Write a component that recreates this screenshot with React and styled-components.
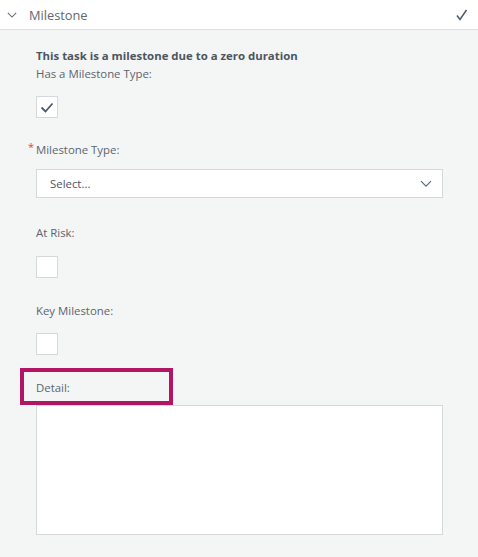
import React from 'react'
import styled, { createGlobalStyle } from 'styled-components'

const Global = createGlobalStyle`
  html, body {
    margin: 0;
    padding: 0;
    background: #f4f6f5;
  }
  body {
    font-family: 'Open Sans', 'Noto Sans', sans-serif;
    color: #5b6470;
  }
`

const Header = styled.div`
  display: flex;
  align-items: center;
  height: 30px;
  padding: 0 10px 0 7px;
  background: #fff;
  border-bottom: 1px solid #dcdfe0;
  box-sizing: border-box;
`

const HeaderTitle = styled.span`
  flex: 1;
  margin-left: 12px;
  font-size: 12.8px;
  color: #5f6873;
`

const Body = styled.div`
  padding: 18px 35px 22px 36px;
`

const Notice = styled.div`
  font-size: 11.4px;
  font-weight: 700;
  line-height: 16px;
  color: #4d5561;
`

const Label = styled.div`
  position: relative;
  font-size: 11.4px;
  line-height: 16px;
  color: #5b6470;
  margin-top: ${p => p.$top || 0}px;
`

const Required = styled.span`
  position: absolute;
  left: -8px;
  top: -3px;
  color: #e0454a;
  font-size: 11px;
`

const Box = styled.div`
  width: 22px;
  height: 22px;
  box-sizing: border-box;
  background: #fff;
  border: 1px solid #d6d9da;
  display: flex;
  align-items: center;
  justify-content: center;
  margin-top: ${p => p.$top || 0}px;
`

const Select = styled.div`
  display: flex;
  align-items: center;
  justify-content: space-between;
  height: 29px;
  box-sizing: border-box;
  margin-top: 11px;
  padding: 0 10px 0 13px;
  background: #fff;
  border: 1px solid #d6d9da;
  font-size: 11.4px;
  color: #4d5561;
`

const Highlight = styled.div`
  margin: 13px 0 0 -16px;
  width: 153px;
  height: 37px;
  box-sizing: border-box;
  border: 4px solid #b31565;
  padding: 8px 0 0 12px;
  font-size: 11.4px;
  line-height: 16px;
  color: #5b6470;
`

const TextArea = styled.div`
  height: 130px;
  box-sizing: border-box;
  background: #fff;
  border: 1px solid #d6d9da;
`

const Chevron = ({ size = 12 }) => (
  <svg width={size} height={size * 0.6} viewBox="0 0 12 7" fill="none">
    <path d="M1 1l5 5 5-5" stroke="#5f6e80" strokeWidth="1.3" />
  </svg>
)

const Check = () => (
  <svg width="14" height="11" viewBox="0 0 14 11" fill="none">
    <path d="M1.5 5.5l4 4 7-8" stroke="#4d5a6c" strokeWidth="1.8" />
  </svg>
)

const HeaderTick = () => (
  <svg width="12" height="12" viewBox="0 0 12 12" fill="none">
    <path d="M1 6.5l3 4L10.5 1" stroke="#4f5b6a" strokeWidth="1.5" />
  </svg>
)

export default function App() {
  return (
    <>
      <Global />
      <Header>
        <Chevron size={10} />
        <HeaderTitle>Milestone</HeaderTitle>
        <HeaderTick />
      </Header>
      <Body>
        <Notice>This task is a milestone due to a zero duration</Notice>
        <Label $top={2}>Has a Milestone Type:</Label>
        <Box $top={14}>
          <Check />
        </Box>
        <Label $top={24}>
          <Required>*</Required>Milestone Type:
        </Label>
        <Select>
          <span>Select...</span>
          <Chevron />
        </Select>
        <Label $top={27}>At Risk:</Label>
        <Box $top={15} />
        <Label $top={25}>Key Milestone:</Label>
        <Box $top={14} />
        <Highlight>Detail:</Highlight>
        <TextArea />
      </Body>
    </>
  )
}
